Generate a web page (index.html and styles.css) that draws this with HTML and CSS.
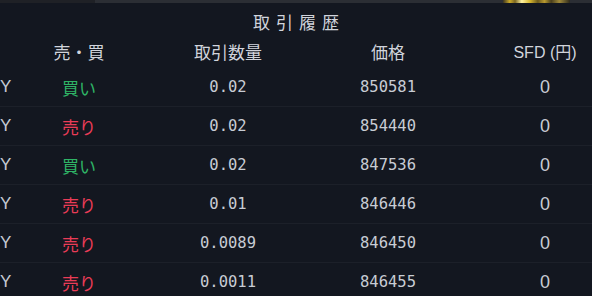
FILE: index.html
```html
<!DOCTYPE html>
<html lang="ja">
<head>
<meta charset="utf-8">
<link rel="stylesheet" href="styles.css">
</head>
<body>
<div class="topbar">
  <div class="tb-left"></div>
  <div class="tb-right"><div class="tb-thumb"></div></div>
</div>
<div class="title">取引履歴</div>
<div class="table">
  <div class="row head">
    <div class="c0"></div>
    <div class="c">売・買</div>
    <div class="c">取引数量</div>
    <div class="c">価格</div>
    <div class="c sfd">SFD (円)</div>
  </div>
  <div class="row">
    <div class="c0">Y</div>
    <div class="c buy">買い</div>
    <div class="c num">0.02</div>
    <div class="c num">850581</div>
    <div class="c zero">0</div>
  </div>
  <div class="row">
    <div class="c0">Y</div>
    <div class="c sell">売り</div>
    <div class="c num">0.02</div>
    <div class="c num">854440</div>
    <div class="c zero">0</div>
  </div>
  <div class="row">
    <div class="c0">Y</div>
    <div class="c buy">買い</div>
    <div class="c num">0.02</div>
    <div class="c num">847536</div>
    <div class="c zero">0</div>
  </div>
  <div class="row">
    <div class="c0">Y</div>
    <div class="c sell">売り</div>
    <div class="c num">0.01</div>
    <div class="c num">846446</div>
    <div class="c zero">0</div>
  </div>
  <div class="row">
    <div class="c0">Y</div>
    <div class="c sell">売り</div>
    <div class="c num">0.0089</div>
    <div class="c num">846450</div>
    <div class="c zero">0</div>
  </div>
  <div class="row">
    <div class="c0">Y</div>
    <div class="c sell">売り</div>
    <div class="c num">0.0011</div>
    <div class="c num">846455</div>
    <div class="c zero">0</div>
  </div>
</div>
</body>
</html>
```

FILE: styles.css
```css
html, body {
  margin: 0;
  padding: 0;
  background: #131720;
  overflow: hidden;
}
body {
  width: 592px;
  height: 296px;
  font-family: "Noto Sans CJK JP", "Liberation Sans", sans-serif;
  color: #d1d4dc;
}
.topbar {
  display: flex;
  height: 3px;
}
.tb-left {
  width: 95px;
  background: #1f2126;
}
.tb-right {
  flex: 1;
  background: #2b2e34;
  display: flex;
  padding-left: 408px;
}
.tb-thumb {
  width: 67px;
  background: linear-gradient(90deg, #3a3320 0%, #c9a92a 10%, #7a6520 18%, #fff3a0 28%, #d8b830 40%, #6c5a1c 52%, #b89a30 62%, #4a3f1c 72%, #a08a3a 84%, #2e2a1c 100%);
}
.title {
  margin-top: 7px;
  height: 24px;
  line-height: 24px;
  text-align: center;
  font-size: 17px;
  letter-spacing: 6px;
  padding-left: 6px;
  color: #d1d4dc;
}
.row {
  display: grid;
  grid-template-columns: 12px 134px 164px 156px 126px;
  height: 38px;
  align-items: center;
  border-bottom: 1px solid #1c2029;
}
.row.head {
  height: 34px;
  border-bottom: none;
}
.c {
  text-align: center;
  white-space: nowrap;
}
.c:last-child {
  padding-left: 32px;
}
.head .c {
  font-size: 17px;
  color: #d1d4dc;
}
.head .sfd {
  font-family: "Liberation Sans", "Noto Sans CJK JP", sans-serif;
  font-size: 16px;
}
.c0 {
  font-family: "Liberation Sans", sans-serif;
  font-size: 17px;
  color: #c5cad3;
}
.buy {
  color: #2fb466;
  font-size: 17px;
}
.sell {
  color: #ea3c57;
  font-size: 17px;
}
.num {
  font-family: "DejaVu Sans Mono", monospace;
  font-size: 15.5px;
  color: #c8ccd4;
}
.zero {
  font-family: "Liberation Sans", sans-serif;
  font-size: 18px;
  color: #c8ccd4;
}
```
